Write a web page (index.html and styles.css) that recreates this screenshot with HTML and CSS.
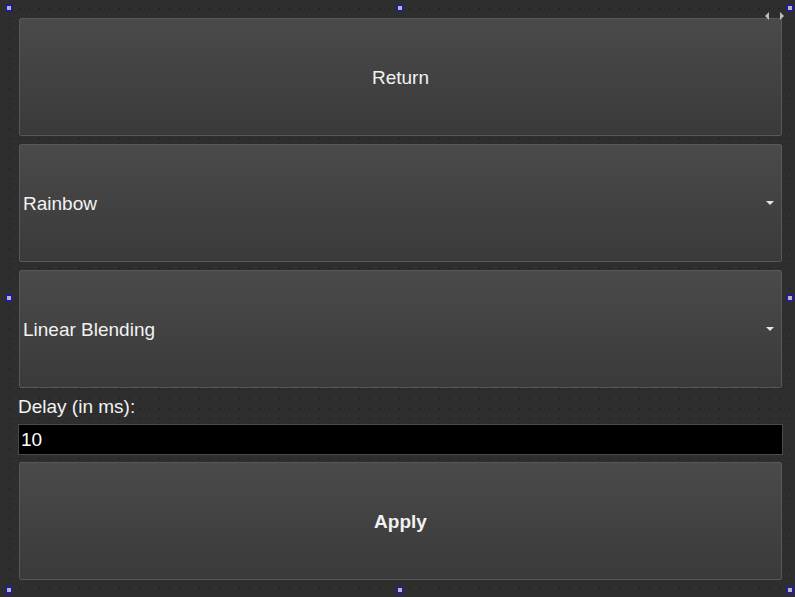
FILE: index.html
```html
<!DOCTYPE html>
<html>
<head>
<meta charset="utf-8">
<link rel="stylesheet" href="styles.css">
</head>
<body>
<div class="canvas">
  <div class="form">
    <button class="btn">Return</button>
    <div class="btn combo"><span>Rainbow</span><span class="arrow"></span></div>
    <div class="btn combo"><span>Linear Blending</span><span class="arrow"></span></div>
    <div class="label">Delay (in ms):</div>
    <div class="edit">10</div>
    <button class="btn bold">Apply</button>
  </div>
  <span class="handle h-tl"></span>
  <span class="handle h-tc"></span>
  <span class="handle h-tr"></span>
  <span class="handle h-ml"></span>
  <span class="handle h-mr"></span>
  <span class="handle h-bl"></span>
  <span class="handle h-bc"></span>
  <span class="handle h-br"></span>
  <div class="scrollarrows"><span class="tri-l"></span><span class="tri-r"></span></div>
</div>
</body>
</html>
```
FILE: styles.css
```css
html, body {
  margin: 0;
  padding: 0;
  width: 795px;
  height: 597px;
  overflow: hidden;
  background: #2e2e2e;
}
.canvas {
  position: relative;
  box-sizing: border-box;
  width: 795px;
  height: 597px;
  padding: 18px 12px 0 18px;
  background-color: #2e2e2e;
  font-family: "Liberation Sans", Arial, sans-serif;
  font-size: 19px;
  color: #f2f2f2;
}
.canvas::before {
  content: "";
  position: absolute;
  inset: 0;
  background-image: repeating-linear-gradient(to right, transparent 0 9px, #141414 9px 10px);
  -webkit-mask-image: repeating-linear-gradient(to bottom, transparent 0 8px, #000 8px 9px, transparent 9px 10px);
  mask-image: repeating-linear-gradient(to bottom, transparent 0 8px, #000 8px 9px, transparent 9px 10px);
  z-index: 0;
}
.form {
  position: relative;
  z-index: 1;
  display: flex;
  flex-direction: column;
  width: 765px;
}
.btn {
  box-sizing: border-box;
  margin: 0 1px 8px 1px;
  height: 118px;
  border: 1px solid #585858;
  border-radius: 2px;
  background: linear-gradient(#4a4a4a, #3a3a3a);
  color: #f2f2f2;
  font-family: "Liberation Sans", Arial, sans-serif;
  font-size: 19px;
  display: flex;
  align-items: center;
  justify-content: center;
  padding: 2px 0 0 0;
}
.btn.bold { font-weight: bold; margin-bottom: 0; }
.combo {
  justify-content: space-between;
  padding: 2px 7px 0 3px;
}
.arrow {
  width: 0;
  height: 0;
  border-left: 4px solid transparent;
  border-right: 4px solid transparent;
  border-top: 4px solid #e6e6e6;
  margin-top: -3px;
}
.label {
  height: 20px;
  line-height: 22px;
  margin: 0 0 8px 0;
}
.edit {
  box-sizing: border-box;
  height: 31px;
  background: #000;
  border: 1px solid #4a4a4a;
  padding: 0 2px;
  line-height: 29px;
  margin-bottom: 7px;
  color: #fff;
}
.handle {
  position: absolute;
  z-index: 2;
  width: 4px;
  height: 4px;
  border: 1px solid #1010ff;
  background: #b8b8b8;
}
.h-tl { left: 6px; top: 5px; }
.h-tc { left: 397px; top: 5px; }
.h-tr { left: 787px; top: 5px; }
.h-ml { left: 6px; top: 295px; }
.h-mr { left: 787px; top: 295px; }
.h-bl { left: 6px; top: 587px; }
.h-bc { left: 397px; top: 587px; }
.h-br { left: 787px; top: 587px; }
.scrollarrows {
  position: absolute;
  z-index: 2;
  left: 765px;
  top: 12px;
  display: flex;
  gap: 11px;
}
.tri-l, .tri-r {
  width: 0;
  height: 0;
  border-top: 4px solid transparent;
  border-bottom: 4px solid transparent;
}
.tri-l { border-right: 4px solid #bdbdbd; }
.tri-r { border-left: 4px solid #bdbdbd; }
```
